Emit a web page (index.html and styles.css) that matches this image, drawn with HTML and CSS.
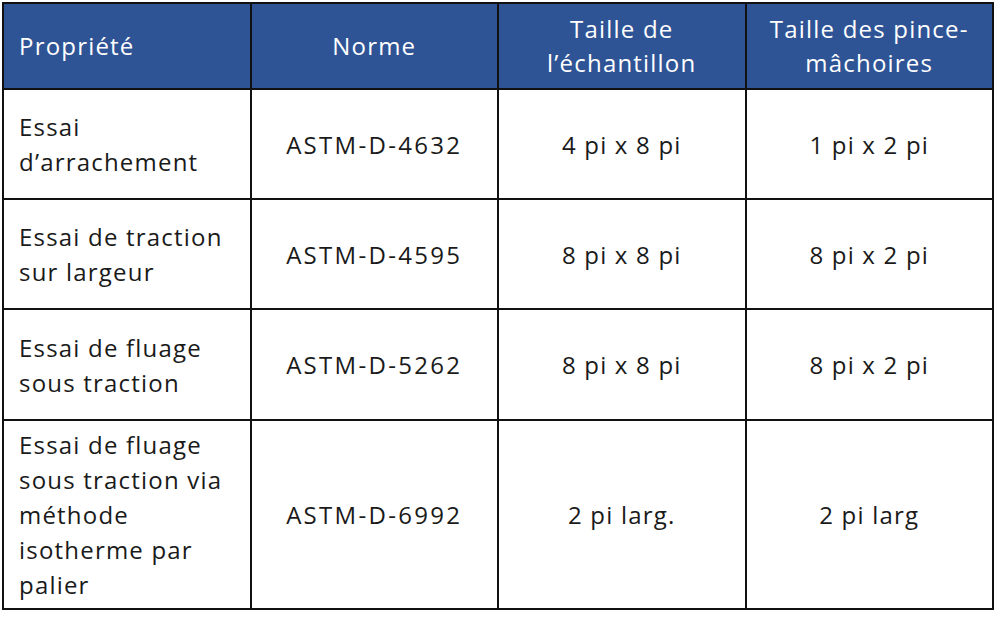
FILE: index.html
```html
<!DOCTYPE html>
<html lang="fr">
<head>
<meta charset="utf-8">
<title>Essais</title>
<link rel="stylesheet" href="styles.css">
</head>
<body>
<table class="spec">
  <colgroup>
    <col class="col">
    <col class="col">
    <col class="col">
    <col class="col">
  </colgroup>
  <thead>
    <tr class="head-row">
      <th class="first">Propriété</th>
      <th>Norme</th>
      <th>Taille de<br>l’échantillon</th>
      <th>Taille des pince-<br>mâchoires</th>
    </tr>
  </thead>
  <tbody>
    <tr class="row-a">
      <td class="first">Essai<br>d’arrachement</td>
      <td class="code">ASTM-D-4632</td>
      <td>4 pi x 8 pi</td>
      <td>1 pi x 2 pi</td>
    </tr>
    <tr class="row-a">
      <td class="first">Essai de traction<br>sur largeur</td>
      <td class="code">ASTM-D-4595</td>
      <td>8 pi x 8 pi</td>
      <td>8 pi x 2 pi</td>
    </tr>
    <tr class="row-b">
      <td class="first">Essai de fluage<br>sous traction</td>
      <td class="code">ASTM-D-5262</td>
      <td>8 pi x 8 pi</td>
      <td>8 pi x 2 pi</td>
    </tr>
    <tr class="row-c">
      <td class="first">Essai de fluage<br>sous traction via<br>méthode<br>isotherme par<br>palier</td>
      <td class="code">ASTM-D-6992</td>
      <td>2 pi larg.</td>
      <td>2 pi larg</td>
    </tr>
  </tbody>
</table>
</body>
</html>
```

FILE: styles.css
```css
html, body {
  margin: 0;
  padding: 0;
  background: #ffffff;
}
body {
  padding: 2px 0 0 2px;
  font-family: "Open Sans", Lato, sans-serif;
  color: #1a1a1a;
}
.spec {
  border-collapse: collapse;
  width: 990px;
  table-layout: fixed;
  font-size: 24px;
  line-height: 35px;
  letter-spacing: 1.2px;
}
.col { width: 247.5px; }
.spec th, .spec td {
  border: 2px solid #111111;
  text-align: center;
  vertical-align: middle;
  padding: 7px 4px;
  white-space: nowrap;
}
.spec th {
  background: #2f5496;
  color: #ffffff;
  font-weight: 400;
  line-height: 34px;
}
.spec .first {
  text-align: left;
  padding-left: 15px;
}
.spec .code { letter-spacing: 2.3px; }
.head-row { height: 86px; }
.row-a { height: 110px; }
.row-b { height: 111px; }
.row-c td { padding-top: 6px; padding-bottom: 6px; }
```
